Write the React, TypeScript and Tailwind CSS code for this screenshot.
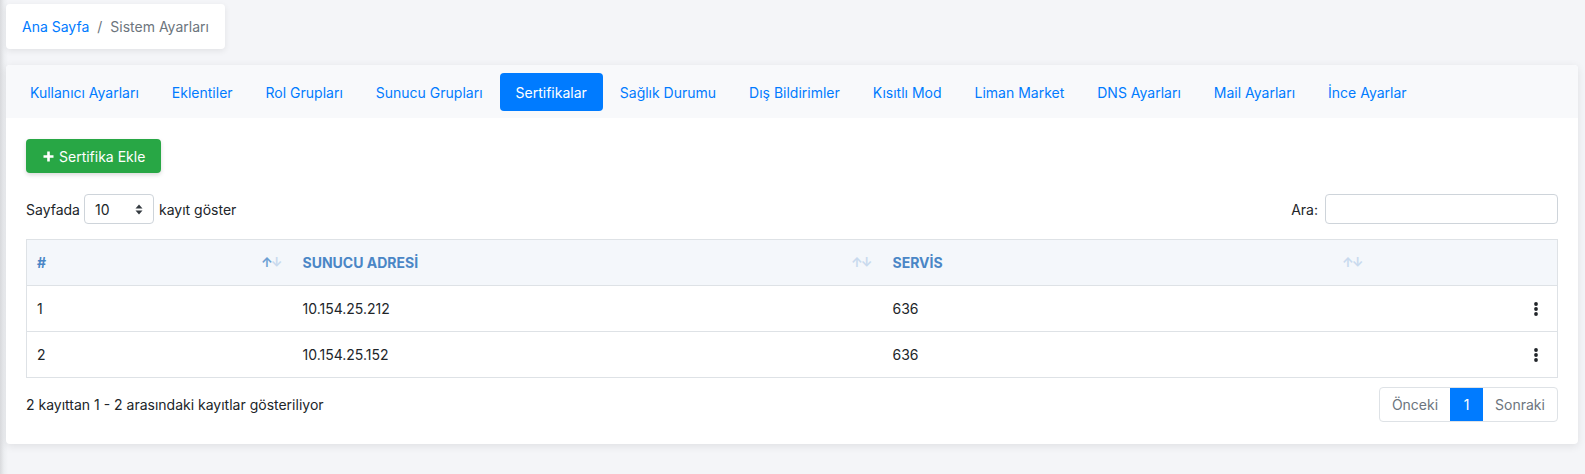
import React from "react";

const tabs = [
	"Kullanıcı Ayarları",
	"Eklentiler",
	"Rol Grupları",
	"Sunucu Grupları",
	"Sertifikalar",
	"Sağlık Durumu",
	"Dış Bildirimler",
	"Kısıtlı Mod",
	"Liman Market",
	"DNS Ayarları",
	"Mail Ayarları",
	"İnce Ayarlar",
];

const rows = [
	{ id: 1, address: "10.154.25.212", service: "636" },
	{ id: 2, address: "10.154.25.152", service: "636" },
];

const SortIcon = ({ active = false }: { active?: boolean }) => (
	<span className="flex items-center text-[13px] font-bold leading-none select-none">
		<span className={active ? "text-[#6d9fd3]" : "text-[#c9daee]"}>↑</span>
		<span className="-ml-[2px] text-[#c9daee]">↓</span>
	</span>
);

const Dots = () => (
	<svg width="4" height="14" viewBox="0 0 4 14">
		<circle cx="2" cy="2" r="1.9" fill="#212529" />
		<circle cx="2" cy="7" r="1.9" fill="#212529" />
		<circle cx="2" cy="12" r="1.9" fill="#212529" />
	</svg>
);

export default function App() {
	return (
		<div
			className="min-h-[474px] bg-[linear-gradient(to_right,#d9dadd,#eceef1_4px,#f4f5f8_8px)] pl-[6px] pr-[7px] pt-1 text-[14px] text-[#212529]"
			style={{ fontFamily: "Inter, 'Noto Sans', sans-serif" }}
		>
			{/* breadcrumb */}
			<div className="inline-flex items-center rounded-[4px] bg-white px-4 h-[45px] shadow-[0_2px_6px_rgba(0,0,0,0.08)]">
				<span className="text-[#007bff]">Ana Sayfa</span>
				<span className="px-2 text-[#6c757d]">/</span>
				<span className="text-[#6c757d]">Sistem Ayarları</span>
			</div>

			<div className="mt-4 rounded-[4px] bg-white shadow-[0_2px_8px_rgba(0,0,0,0.09)]">
				{/* tabs */}
				<div className="flex items-center gap-[1px] rounded-t-[4px] bg-[#f8f9fb] pl-[8px] pt-2 pb-[7px]">
					{tabs.map((t) => (
						<div
							key={t}
							className={
								t === "Sertifikalar"
									? "flex h-[38px] items-center rounded-[4px] bg-[#007bff] px-4 text-white"
									: "flex h-[38px] items-center px-4 text-[#007bff]"
							}
						>
							{t}
						</div>
					))}
				</div>

				<div className="px-5 pt-[21px] pb-[22px]">
					<button className="flex h-[34px] items-center gap-[5px] rounded-[4px] bg-[#28a745] pl-[17px] pr-[16px] text-white shadow-[0_2px_4px_rgba(0,0,0,0.15)]">
						<svg width="11" height="11" viewBox="0 0 11 11">
							<path d="M5.5 0.5v10M0.5 5.5h10" stroke="white" strokeWidth="2.6" />
						</svg>
						Sertifika Ekle
					</button>

					<div className="mt-[21px] flex h-[30px] items-center justify-between">
						<div className="flex items-center">
							<span>Sayfada</span>
							<div className="ml-1 flex h-[30px] w-[70px] items-center justify-between rounded-[4px] border border-[#ced4da] pl-[10px] pr-[10px]">
								<span>10</span>
								<svg width="8" height="11" viewBox="0 0 8 11">
									<path d="M4 0.5L7.5 4.5H0.5Z M4 10.5L0.5 6.5H7.5Z" fill="#343a40" />
								</svg>
							</div>
							<span className="ml-[5px]">kayıt göster</span>
						</div>
						<div className="flex items-center gap-[7px]">
							<span>Ara:</span>
							<div className="h-[30px] w-[233px] rounded-[4px] border border-[#ced4da]" />
						</div>
					</div>

					<table className="mt-[15px] w-full table-fixed border-collapse border border-[#dee2e6]">
						<colgroup>
							<col className="w-[266px]" />
							<col className="w-[590px]" />
							<col className="w-[491px]" />
							<col />
						</colgroup>
						<thead>
							<tr className="h-[46px] bg-[#f4f7fb] text-left font-bold text-[#4a86c6]">
								<th className="px-[10px]">
									<div className="flex items-center justify-between">
										<span>#</span>
										<SortIcon active />
									</div>
								</th>
								<th className="px-[10px]">
									<div className="flex items-center justify-between">
										<span>SUNUCU ADRESİ</span>
										<SortIcon />
									</div>
								</th>
								<th className="px-[10px]">
									<div className="flex items-center justify-between">
										<span>SERVİS</span>
										<SortIcon />
									</div>
								</th>
								<th />
							</tr>
						</thead>
						<tbody>
							{rows.map((r) => (
								<tr key={r.id} className="h-[46px] border-t border-[#dee2e6]">
									<td className="px-[10px]">{r.id}</td>
									<td className="px-[10px]">{r.address}</td>
									<td className="px-[10px]">{r.service}</td>
									<td className="pr-[19px]">
										<div className="flex justify-end">
											<Dots />
										</div>
									</td>
								</tr>
							))}
						</tbody>
					</table>

					<div className="mt-[9px] flex items-center justify-between">
						<span>2 kayıttan 1 - 2 arasındaki kayıtlar gösteriliyor</span>
						<div className="flex h-[35px] overflow-hidden rounded-[4px] border border-[#dee2e6] text-[#6c757d]">
							<span className="flex w-[70px] items-center justify-center">Önceki</span>
							<span className="flex w-[33px] items-center justify-center bg-[#007bff] text-white">1</span>
							<span className="flex w-[74px] items-center justify-center">Sonraki</span>
						</div>
					</div>
				</div>
			</div>
		</div>
	);
}
